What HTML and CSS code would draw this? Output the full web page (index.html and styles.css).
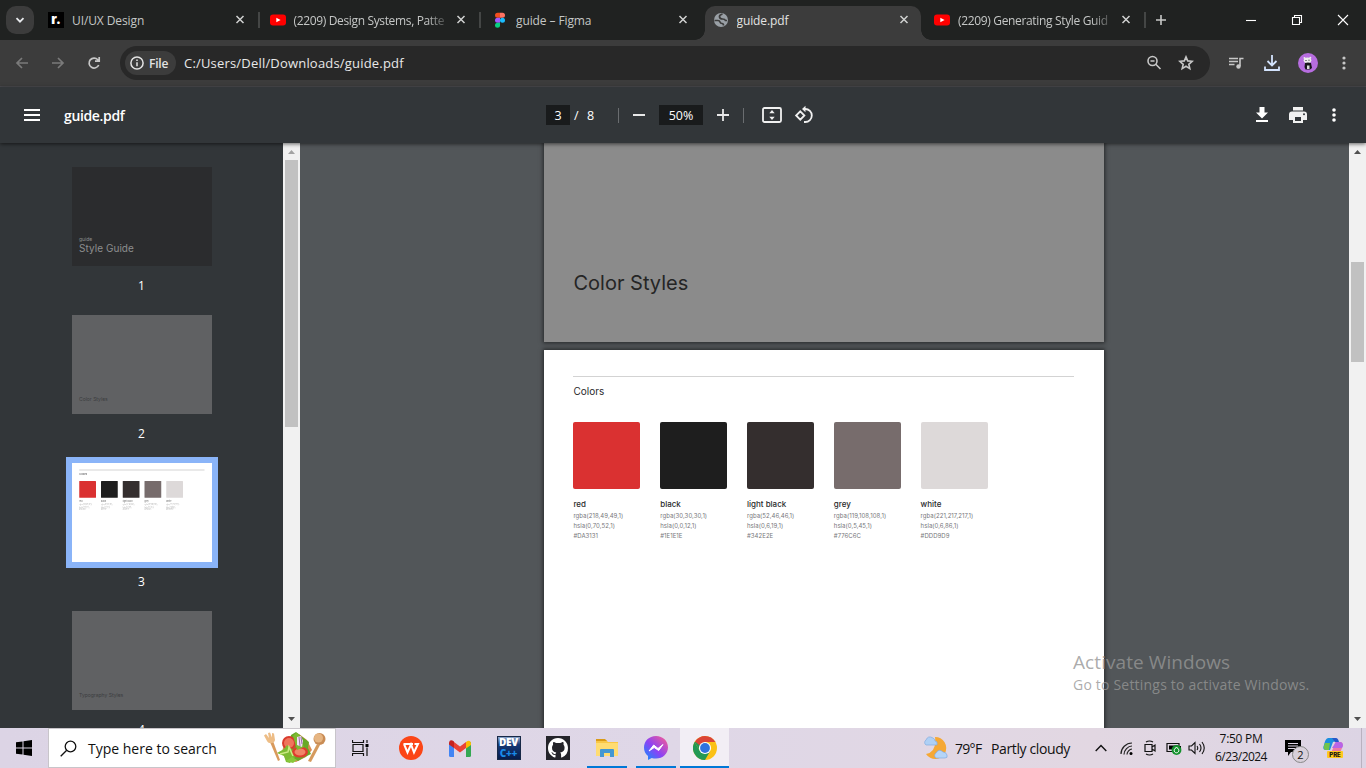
FILE: index.html
```html
<!DOCTYPE html>
<html lang="en">
<head>
<meta charset="utf-8">
<title>guide.pdf</title>
<link rel="stylesheet" href="styles.css">
</head>
<body>
<div class="screen">
  <header class="tabs">
    <button class="tab-search"><svg width="12" height="12" viewBox="0 0 12 12"><path d="M2.500 4.200 6 7.700l3.500-3.500" fill="none" stroke="#e8eaed" stroke-width="1.800"/></svg></button>
    <div class="tab"><span class="fav roadmap">r.</span><span class="tab-title t1">UI/UX Design</span><svg class="x" viewBox="0 0 16 16"><path d="m4.500 4 7 7m0-7-7 7"/></svg></div>
    <div class="tab"><svg class="fav" viewBox="0 0 16 16"><rect y="2.500" width="16" height="11" rx="3" fill="#f00"/><path d="m6.300 5.700 4.300 2.300-4.300 2.300z" fill="#fff"/></svg><span class="tab-title fade t2">(2209) Design Systems, Patte</span><svg class="x" viewBox="0 0 16 16"><path d="m4.500 4 7 7m0-7-7 7"/></svg></div>
    <div class="tab nosep"><svg class="fav" viewBox="0 0 16 16"><path d="M5.500.8H8v5H5.500a2.500 2.500 0 0 1 0-5" fill="#f24e1e"/><path d="M8 .8h2.500a2.500 2.500 0 0 1 0 5H8" fill="#ff7262"/><path d="M5.500 5.800H8v5H5.500a2.500 2.500 0 0 1 0-5" fill="#a259ff"/><circle cx="10.500" cy="8.300" r="2.500" fill="#1abcfe"/><path d="M5.500 10.800H8v2.500a2.500 2.500 0 1 1-2.500-2.500" fill="#0acf83"/></svg><span class="tab-title t3">guide – Figma</span><svg class="x" viewBox="0 0 16 16"><path d="m4.500 4 7 7m0-7-7 7"/></svg></div>
    <div class="tab active"><svg class="fav" viewBox="0 0 16 16"><circle cx="8" cy="8" r="7" fill="#9aa0a6"/><path d="M1.500 8.500H5q1.500 0 2 1.500t2 1.500q1.500 0 1.500 2M9.500 2Q6 3 6.500 5t3 2 3 1.500H14" fill="none" stroke="#3c3c3c" stroke-width="1.700"/></svg><span class="tab-title t4">guide.pdf</span><svg class="x" viewBox="0 0 16 16"><path d="m4.500 4 7 7m0-7-7 7"/></svg></div>
    <div class="tab"><svg class="fav" viewBox="0 0 16 16"><rect y="2.500" width="16" height="11" rx="3" fill="#f00"/><path d="m6.300 5.700 4.300 2.300-4.300 2.300z" fill="#fff"/></svg><span class="tab-title fade t5">(2209) Generating Style Guid</span><svg class="x" viewBox="0 0 16 16"><path d="m4.500 4 7 7m0-7-7 7"/></svg></div>
    <svg class="newtab" width="12" height="12" viewBox="0 0 12 12"><path d="M6 1v10M1 6h10" stroke="#c7c9c8" stroke-width="1.600"/></svg>
    <div class="wincontrols">
      <svg width="12" height="12" viewBox="0 0 12 12"><path d="M1 6.500h10"/></svg>
      <svg width="12" height="12" viewBox="0 0 12 12"><path d="M1.500 3.500h7v7h-7zM3.500 3.500v-2h7v7h-2"/></svg>
      <svg width="12" height="12" viewBox="0 0 12 12"><path d="m1 1 10 10M11 1 1 11"/></svg>
    </div>
  </header>

  <nav class="toolbar">
    <div class="navbtns">
      <svg class="dim" width="14" height="14" viewBox="0 0 14 14"><path d="M13 7H2M7 2 2 7l5 5"/></svg>
      <svg class="dim" width="14" height="14" viewBox="0 0 14 14"><path d="M1 7h11M7 2l5 5-5 5"/></svg>
      <svg width="14" height="14" viewBox="0 0 14 14"><path d="M11.700 9A5 5 0 1 1 10.800 3.700L12 5M12.200 1v4.200H8"/></svg>
    </div>
    <div class="omnibox">
      <span class="chip"><svg width="14" height="14" viewBox="0 0 14 14"><circle cx="7" cy="7" r="6.100" fill="none" stroke="#e3e3e3" stroke-width="1.500"/><path d="M7 6.200v4M7 3.600v1.500" stroke="#e3e3e3" stroke-width="1.500"/></svg><b>File</b></span>
      <span class="url">C:/Users/Dell/Downloads/guide.pdf</span>
      <svg class="mag" width="16" height="16" viewBox="0 0 16 16"><circle cx="6.500" cy="6" r="4.500"/><path d="m9.800 9.300 4.700 4.700M4.500 6h4"/></svg>
      <svg width="16" height="16" viewBox="0 0 16 16"><path d="m8 1.900 1.700 4 4.500.4-3.400 3 1 4.300L8 11.300l-3.800 2.300 1-4.300-3.400-3 4.500-.4z"/></svg>
    </div>
    <div class="extras">
      <svg width="16" height="16" viewBox="0 0 16 16"><path d="M1 3.500h9M1 6.500h9M1 9.500h5.500M12 11V3.500h3.500" fill="none" stroke="#c7c7c7" stroke-width="1.600"/><circle cx="10.500" cy="11.500" r="2.200" fill="#c7c7c7"/></svg>
      <svg width="18" height="18" viewBox="0 0 18 18"><path d="M9 1v10M4.500 7 9 11.500 13.500 7M2 12.500V16h14v-3.500" fill="none" stroke="#d3e3fd" stroke-width="1.800"/></svg>
      <svg width="20" height="20" viewBox="0 0 20 20"><circle cx="10" cy="10" r="10" fill="#b76de0"/><ellipse cx="9.500" cy="7.300" rx="3.800" ry="2.900" fill="#eee"/><circle cx="6.500" cy="5" r="1" fill="#eee"/><circle cx="12.300" cy="4.800" r="1" fill="#eee"/><path d="M7 10q3-1 6 0l1 5-2 1.500H7.500L6.500 14z" fill="#19161c"/><path d="M9 12.500h2.500V16H9z" fill="#ddd"/><path d="M7.500 7.500h1m2-.3h1" stroke="#222"/></svg>
      <svg width="4" height="16" viewBox="0 0 4 16"><g fill="#c7c7c7"><circle cx="2" cy="3" r="1.600"/><circle cx="2" cy="8" r="1.600"/><circle cx="2" cy="13" r="1.600"/></g></svg>
    </div>
  </nav>

  <section class="pdfbar">
    <div class="pdf-left"><svg width="16" height="12" viewBox="0 0 16 12"><path d="M0 1h16M0 6h16M0 11h16" stroke="#fff" stroke-width="2"/></svg><span class="pdf-title">guide.pdf</span></div>
    <div class="pdf-mid">
      <span class="field pagenum">3</span><span class="slash">/</span><span class="total">8</span><i class="sep s1"></i>
      <svg width="12" height="12" viewBox="0 0 12 12"><path d="M0 6h12" stroke="#e8e8e8" stroke-width="2"/></svg>
      <span class="field zoom">50%</span>
      <svg width="12" height="12" viewBox="0 0 12 12"><path d="M0 6h12M6 0v12" stroke="#e8e8e8" stroke-width="1.800"/></svg><i class="sep s2"></i>
      <svg class="fit" width="20" height="16" viewBox="0 0 20 16"><rect x="1" y="1" width="18" height="14" rx="1.500" fill="none" stroke="#f1f1f1" stroke-width="1.800"/><path d="m10 3 2.700 3.300H7.300zM10 13 7.300 9.700h5.400z" fill="#f1f1f1"/></svg>
      <svg class="rot" width="20" height="20" viewBox="0 0 20 20"><path d="m6.300 6.300 4.100 4.200-4.100 4.200-4.200-4.200zM10 4h1.300a6.500 6.500 0 0 1 0 13H10" fill="none" stroke="#f1f1f1" stroke-width="1.800"/><path d="M11.500.7v6.600L8 4z" fill="#f1f1f1"/></svg>
    </div>
    <div class="pdf-right">
      <svg width="12" height="16" viewBox="0 0 12 16"><path d="M3.500 0h5v5.500H12l-6 6-6-6h3.500zM0 13h12v2H0z" fill="#fff"/></svg>
      <svg width="18" height="16" viewBox="0 0 18 16"><path d="M4 0h10v3.500H4zM3 4.500h12a3 3 0 0 1 3 3V13h-4v3H4v-3H0V7.500a3 3 0 0 1 3-3" fill="#f1f1f1"/><path d="M6 10h6v4H6z" fill="#323639"/><circle cx="15" cy="7.300" r="1" fill="#323639"/></svg>
      <svg width="4" height="16" viewBox="0 0 4 16"><g fill="#fff"><circle cx="2" cy="3" r="1.800"/><circle cx="2" cy="8" r="1.800"/><circle cx="2" cy="13" r="1.800"/></g></svg>
    </div>
  </section>

  <main class="viewer">
    <aside class="sidebar">
      <div class="thumbs">
        <figure><div class="thumb dark"><small>guide</small><span>Style Guide</span></div><figcaption>1</figcaption></figure>
        <figure><div class="thumb cover"><em>Color Styles</em></div><figcaption>2</figcaption></figure>
        <figure><div class="thumb selected"><div class="mini">
          <div class="sheet">
            <h2>Colors</h2>
            <div class="palette">
              <div class="color"><div class="swatch red"></div><h3>red</h3><p>rgba(218,49,49,1)<br>hsla(0,70,52,1)<br>#DA3131</p></div>
              <div class="color"><div class="swatch black"></div><h3>black</h3><p>rgba(30,30,30,1)<br>hsla(0,0,12,1)<br>#1E1E1E</p></div>
              <div class="color"><div class="swatch light"></div><h3>light black</h3><p>rgba(52,46,46,1)<br>hsla(0,6,19,1)<br>#342E2E</p></div>
              <div class="color"><div class="swatch grey"></div><h3>grey</h3><p>rgba(119,108,108,1)<br>hsla(0,5,45,1)<br>#776C6C</p></div>
              <div class="color"><div class="swatch white"></div><h3>white</h3><p>rgba(221,217,217,1)<br>hsla(0,6,86,1)<br>#DDD9D9</p></div>
            </div>
          </div></div></div><figcaption>3</figcaption></figure>
        <figure><div class="thumb cover"><em>Typography Styles</em></div><figcaption>4</figcaption></figure>
      </div>
      <div class="scroll side"><svg class="up" width="7" height="4" viewBox="0 0 7 4"><path d="M0 4h7L3.500 0z" fill="#a3a3a3"/></svg><i></i><svg class="down" width="7" height="4" viewBox="0 0 7 4"><path d="M0 0h7L3.500 4z" fill="#505050"/></svg></div>
    </aside>
    <div class="doc">
      <div class="page cover-page"><h1>Color Styles</h1></div>
      <div class="page sheet">
        <h2>Colors</h2>
        <div class="palette">
          <div class="color"><div class="swatch red"></div><h3>red</h3><p>rgba(218,49,49,1)<br>hsla(0,70,52,1)<br>#DA3131</p></div>
          <div class="color"><div class="swatch black"></div><h3>black</h3><p>rgba(30,30,30,1)<br>hsla(0,0,12,1)<br>#1E1E1E</p></div>
          <div class="color"><div class="swatch light"></div><h3>light black</h3><p>rgba(52,46,46,1)<br>hsla(0,6,19,1)<br>#342E2E</p></div>
          <div class="color"><div class="swatch grey"></div><h3>grey</h3><p>rgba(119,108,108,1)<br>hsla(0,5,45,1)<br>#776C6C</p></div>
          <div class="color"><div class="swatch white"></div><h3>white</h3><p>rgba(221,217,217,1)<br>hsla(0,6,86,1)<br>#DDD9D9</p></div>
        </div>
      </div>
    </div>
    <div class="scroll main"><svg class="up" width="7" height="4" viewBox="0 0 7 4"><path d="M0 4h7L3.500 0z" fill="#505050"/></svg><i></i><svg class="down" width="7" height="4" viewBox="0 0 7 4"><path d="M0 0h7L3.500 4z" fill="#505050"/></svg></div>
  </main>

  <div class="watermark"><div class="wm1">Activate Windows</div><div class="wm2">Go to Settings to activate Windows.</div></div>

  <footer class="taskbar">
    <div class="start"><svg width="16" height="16" viewBox="0 0 16 16"><path d="M0 2.300 6.500 1.400v6.100H0zM7.500 1.200 16 0v7.500H7.500zM0 8.500h6.500v6.100L0 13.700zM7.500 8.500H16V16l-8.500-1.200z"/></svg></div>
    <div class="search">
      <svg width="17" height="17" viewBox="0 0 17 17"><circle cx="10.500" cy="6.500" r="5.300" fill="none" stroke="#111" stroke-width="1.300"/><path d="m6.700 10.300-6 6" stroke="#111" stroke-width="1.300"/></svg>
      <span class="type">Type here to search</span>
      <svg class="salad" width="62" height="32" viewBox="0 0 62 32">
        <path d="m6 10 8 19 2-1-7-19z" fill="#d99a5c"/><path d="M0 3.500 2 2l3 4-1-5 2-.5 2 5V1l2 .5L11 8c0 3-6 5-8 1z" fill="#edbd86"/>
        <path d="m53 12-9 17 3 1 9-17z" fill="#d59a5d"/><circle cx="55.500" cy="7" r="6" fill="#c98c55"/><circle cx="54.500" cy="6" r="4.500" fill="#e6b582"/>
        <path d="m18 20 2-8 8-9 7-1 8 6 5 10-6 7-10 5-10-2z" fill="#d88b52"/>
        <path d="m27 3 5-3 5 4 8 6-1 6 3 6-8 4-5 3-5-3-7-3 3-8z" fill="#67a927"/>
        <circle cx="25" cy="11" r="7" fill="#d93b2e"/><circle cx="25" cy="11" r="5" fill="#ef755c"/>
        <path d="m13 21 7-4 3-4 6 5 2 7-5 6-4-1-2-6z" fill="#7dbb32"/><path d="m22 29 6-4 5 3-4 3z" fill="#89c83b"/>
        <ellipse cx="36" cy="20" rx="8" ry="5.500" fill="#df3d2e"/><ellipse cx="36" cy="20" rx="5.500" ry="3.500" fill="#f18567"/>
        <path d="M29 4q5-7 7 2l4 9-7 3z" fill="#7eb931"/><path d="m33 5 4-1 2 5-1 6-5-2z" fill="#efdff3"/><path d="m35 5 1 9m1-9 1 7" stroke="#9f6bab" fill="none"/><path d="m16 22 8-2 1-5 4 9" fill="none" stroke="#ccea83" stroke-width="1.500"/>
      </svg>
    </div>
    <div class="task view"><svg width="17" height="16" viewBox="0 0 17 16"><path d="M1 4.500h10v7H1zM.5 0v2.500h11V0M.5 16v-2.500h11V16M15 0v3M15 7.500V16" fill="none" stroke="#111" stroke-width="1.200"/><path d="M13.500 4h3v3h-3z"/></svg></div>
    <div class="task"><svg width="24" height="24" viewBox="0 0 24 24"><circle cx="12" cy="12" r="12" fill="#fb4617"/><path d="M4.500 8h9.500M5 8l3.500 8.500 3.500-8 3 8L19 8h-3.500" fill="none" stroke="#fff" stroke-width="2"/></svg></div>
    <div class="task"><svg width="22" height="17" viewBox="0 0 22 17"><path d="M0 2.500 5 5v12H1.500Q0 17 0 15.500z" fill="#4285f4"/><path d="M17 5l5-3v13.500q0 1.500-1.500 1.500H17z" fill="#34a853"/><path d="m5 2 6 4.500L17 2v6l-6 4.500L5 8z" fill="#ea4335"/><path d="M0 2.500Q1-1.500 5 1.500V8L0 4.500" fill="#c5221f"/><path d="M17 2q4-3 5 1v2l-5 3.500z" fill="#fbbc04"/></svg></div>
    <div class="task"><div class="dev"><b>DEV</b><b class="cpp">C++</b></div></div>
    <div class="task"><svg width="24" height="24" viewBox="0 0 24 24"><path d="M0 0h24v24H0z" fill="#24242a"/><path d="M12 2C6.300 2 2 6.500 2 12c0 4.500 2.800 8.200 6.800 9.500.6.100.7-.2.700-.5v-2.200c-2.400.5-3-.6-3.300-1.300-.3-.6-.7-1-1.100-1.300.9-.2 1.600.1 2.200 1 .6.900 1.300 1 2.300.7.100-.7.400-1.100.7-1.400-2.800-.4-4.300-1.800-4.300-4.800 0-1.200.4-2.200 1.100-2.900-.2-.8-.2-1.800.2-2.900 1.200 0 2.200.6 3 1.200a10 10 0 0 1 4 0c.8-.6 1.800-1.200 3-1.200.4 1.100.4 2.100.2 2.900.7.700 1.100 1.700 1.100 2.900 0 3-1.600 4.400-4.400 4.800.6.500.9 1.300.9 2.200V21c0 .4.200.6.700.5A10 10 0 0 0 22 12c0-5.500-4.400-10-10-10" fill="#fff"/></svg></div>
    <div class="task open"><svg width="22" height="20" viewBox="0 0 22 20"><path d="M0 2h10l2 2h10v14H0z" fill="#f9c746"/><path d="M0 1h9l2 2H0z" fill="#da9b17"/><path d="M0 5h22v13H0z" fill="#ffdc72"/><path d="M4 12q0-1 1-1h12q1 0 1 1v7h-4v-4H8v4H4z" fill="#4497d2"/></svg></div>
    <div class="task open"><svg width="24" height="24" viewBox="0 0 24 24"><defs><linearGradient id="ms" x1="0" y1="1" x2="1" y2="0"><stop stop-color="#0695ff"/><stop offset=".45" stop-color="#8b42f5"/><stop offset="1" stop-color="#ff5f8c"/></linearGradient></defs><path d="M12 0C5 0 0 5 0 11.600c0 3.400 1.300 6.400 4 8.500V24l3.700-2c1.400.4 2.800.6 4.300.6 7 0 12-5 12-11.300S19 0 12 0" fill="url(#ms)"/><path d="m5 15 4.700-6 4.300 3.500 5-4-4.300 6-4.500-3z" fill="#fff" stroke="#fff"/></svg></div>
    <div class="task open current"><svg width="24" height="24" viewBox="0 0 24 24"><circle cx="12" cy="12" r="12" fill="#fbc116"/><path d="M1.600 6A12 12 0 0 0 12 24l5.200-9L12 12l-5.200 3z" fill="#229954"/><path d="M1.600 6 6.800 15 12 12V6z" fill="#229954"/><path d="M2 5.500Q6 0 12 0q7 0 10.400 6H12L6.300 9z" fill="#db4437"/><circle cx="12" cy="12" r="6.100" fill="#fff"/><circle cx="12" cy="12" r="4.900" fill="#2f73df"/></svg></div>
    <div class="tray">
      <svg class="weather" width="26" height="24" viewBox="0 0 26 24"><path d="M12 1a11 11 0 1 1-9 17q11-2 9-17" fill="#f5a834"/><path d="M3 9a3 3 0 0 1 0-5Q5-1 10 2q2 1 2 3 3 0 2 4z" fill="#aed0f5" stroke="#82acdf" stroke-width=".7"/><path d="M13 22a3 3 0 0 1 0-5q3-5 7-1 3 0 4 3t-2 3z" fill="#b5d5f8" stroke="#82acdf" stroke-width=".7"/></svg>
      <span class="temp">79°F</span><span class="cloudy">Partly cloudy</span>
      <svg class="chev" width="12" height="8" viewBox="0 0 12 8"><path d="m.7 7 5.300-5.500L11.300 7" fill="none" stroke="#111" stroke-width="1.400"/></svg>
      <svg class="wifi" width="13" height="13" viewBox="0 0 13 13"><path d="M1 12C1 6 6 1 12 1M4 12.500C4 8 8 4 12 4M7 12.500C7 10 9.500 7 12 7" fill="none" stroke="#222" stroke-width="1.200"/><circle cx="11" cy="11.500" r="1.500"/></svg>
      <svg class="meet" width="12" height="16" viewBox="0 0 12 16"><path d="M1 4.500h7v7H1zM8 7l3-2v6L8 9M2 2q3.500-2 7 0M2 14q3.500 2 7 0" fill="none" stroke="#111" stroke-width="1.200"/></svg>
      <svg class="bat" width="16" height="13" viewBox="0 0 16 13"><path d="M1 1.500h12v8H1z" fill="none" stroke="#111" stroke-width="1.200"/><path d="M3 3.500h9v4H3zM13 4h2v3h-2z"/><circle cx="10.500" cy="8" r="4.900" fill="#14912d"/><path d="m10.500 5 2 2.300c1 2-.5 3.500-2 3.500s-3-1.500-2-3.500z" fill="none" stroke="#fff"/></svg>
      <svg class="vol" width="17" height="14" viewBox="0 0 17 14"><path d="M1 5h2.500L7 1.500v11L3.500 9H1zM9 5q1.500 2 0 4M11.500 3q3 4 0 8M14 1q4.500 6 0 12" fill="none" stroke="#111" stroke-width="1.100"/></svg>
      <div class="clock"><span class="time">7:50 PM</span><span class="date">6/23/2024</span></div>
      <div class="notif"><svg width="17" height="17" viewBox="0 0 17 17"><path d="M0 0h16v12H6l-3 4v-4H0z"/><path d="M3 3.500h10M3 6h10M3 8.500h7" stroke="#ddd4e4"/></svg><span>2</span></div>
      <div class="copilot"><svg width="20" height="17" viewBox="0 0 20 17"><path d="M5 1h6q2 0 2.500 3L10 5 7 13H3Q-1 13 1 8 2 2 5 1" fill="#1c8fdf"/><path d="M2 6h5l-1 7H3q-4 0-1-7" fill="#70c44c"/><path d="M9 1h4q2 0 3 4h-4z" fill="#2658c9"/><path d="M13 5h4q4 0 2 6l-2 5H8l3-7q1-4 2-4" fill="#ee79a5"/><path d="m11 8 2-3h4q3 0 3 4l-1 2H9z" fill="#b865e6"/></svg><b>PRE</b></div>
      <i class="desktop"></i>
    </div>
  </footer>
</div>
</body>
</html>
```
FILE: styles.css
```css
* { box-sizing: border-box; }
body { margin: 0; font-family: "Open Sans", "Noto Sans", sans-serif; overflow: hidden; }
svg { flex: none; display: block; }
h1, h2, h3, p, figure { margin: 0; font-weight: 400; }
.screen { width: 1366px; height: 768px; display: flex; flex-direction: column; background: #3c3c3c; position: relative; overflow: hidden; }
.tabs { height: 40px; background: #202221; display: flex; align-items: center; flex: none; }
.tab-search { width: 28px; height: 28px; margin: 0 2px 0 6px; padding: 0; border: 0; border-radius: 10px; background: #3c3c3c; display: flex; align-items: center; justify-content: center; flex: none; }
.tab { width: 221.500px; height: 40px; padding: 0 10px 0 12px; display: flex; align-items: center; gap: 8px; flex: none; position: relative; color: #c5c7c6; }
.tab:not(.nosep):not(.active)::after { content: ""; position: absolute; right: -2px; top: 12px; width: 2px; height: 16px; background: #444645; }
.fav { width: 16px; height: 16px; flex: none; }
.roadmap { background: #000; color: #fff; font: 900 13px/14px Inter, sans-serif; text-align: center; }
.tab-title { flex: 1; width: 0; overflow: hidden; white-space: nowrap; font-size: 12px; line-height: 18px; padding-top: 1px; letter-spacing: -.1px; }
.nosep .fav, .nosep .tab-title { position: relative; left: 1px; }
.fade { -webkit-mask-image: linear-gradient(90deg, #000 88%, rgba(0,0,0,.25)); mask-image: linear-gradient(90deg, #000 88%, rgba(0,0,0,.25)); }
.t2 { letter-spacing: -.35px; }
.t5 { letter-spacing: -.34px; }
.x { width: 16px; height: 16px; fill: none; stroke: #d0d2d1; stroke-width: 1.5; }
.tab.active { color: #e3e3e3; }
.tab.active::before { content: ""; position: absolute; left: 4px; right: 1px; top: 6px; bottom: 0; background: #3c3c3c; border-radius: 10px 10px 0 0; }
.tab.active > * { position: relative; }
.tab.active::after { content: ""; position: absolute; left: -6px; right: -9px; bottom: 0; height: 10px; background: radial-gradient(circle at 0 0, transparent 9.500px, #3c3c3c 10px) left / 10px 10px no-repeat, radial-gradient(circle at 100% 0, transparent 9.500px, #3c3c3c 10px) right / 10px 10px no-repeat; }
.newtab { margin-left: 11px; }
.wincontrols { display: flex; gap: 34px; margin-left: auto; margin-right: 17px; }
.wincontrols svg { fill: none; stroke: #fff; stroke-width: 1.1; }
.toolbar { height: 47px; flex: none; background: #3c3c3c; border-bottom: 1px solid #4b4b4f; display: flex; align-items: center; }
.navbtns { width: 120px; padding-left: 15px; display: flex; gap: 22px; }
.navbtns svg { fill: none; stroke: #c7c7c7; stroke-width: 1.7; }
.navbtns .dim { stroke: #7a7a7a; }
.omnibox { width: 1090px; height: 34px; border-radius: 17px; background: #282828; display: flex; align-items: center; padding: 0 16px 0 5px; }
.omnibox > svg { fill: none; stroke: #c7c7c7; stroke-width: 1.6; }
.omnibox .mag { margin-left: auto; margin-right: 16px; }
.chip { width: 51px; height: 24px; border-radius: 12px; background: #3c3c3c; display: flex; align-items: center; gap: 5px; padding-left: 5px; color: #e3e3e3; font-size: 12px; }
.chip b { font-weight: 600; letter-spacing: -.2px; }
.url { margin-left: 8px; color: #e8e8e8; font-size: 13px; letter-spacing: .19px; }
.extras { display: flex; align-items: center; margin-left: 18px; }
.extras svg:nth-child(2) { margin-left: 19px; }
.extras svg:nth-child(3) { margin-left: 17px; }
.extras svg:nth-child(4) { margin-left: 24px; }
.pdfbar { height: 56px; background: #323639; flex: none; display: grid; grid-template-columns: 546px 1fr auto; align-items: center; color: #fff; position: relative; z-index: 2; box-shadow: 0 1px 4px rgba(0,0,0,.6); }
.pdf-left { display: flex; align-items: center; padding-left: 24px; gap: 24px; }
.pdf-title { font-size: 14px; line-height: 20px; font-weight: 600; padding-top: 2px; letter-spacing: -.35px; }
.pdf-mid { display: flex; align-items: center; font-size: 12.500px; }
.field { background: #191b1c; height: 20px; line-height: 21px; text-align: center; }
.pagenum { width: 24px; }
.slash { margin-left: 4px; width: 13px; }
.total { width: 8px; }
.sep { width: 1px; height: 15px; background: #6a6d70; }
.s1 { margin: 0 14px 0 23px; }
.zoom { width: 44px; margin: 0 14px; }
.s2 { margin: 0 18px 0 14px; }
.rot { margin-left: 12px; }
.pdf-right { display: flex; align-items: center; padding-right: 30px; }
.pdf-right svg:nth-child(2) { margin: 0 25px 0 21px; }
.viewer { height: 585px; flex: none; display: flex; background: #525659; }
.sidebar { width: 300px; background: #323639; display: flex; overflow: hidden; }
.thumbs { width: 283px; padding-top: 24px; display: flex; flex-direction: column; align-items: center; }
figure { width: 140px; height: 148px; flex: none; }
.thumb { width: 140px; height: 99px; padding-left: 7.500px; font-family: Inter, sans-serif; }
.thumb.dark { background: #2b2c2e; display: flex; flex-direction: column; padding-top: 69px; color: #8d8e8f; }
.dark small { font-size: 5px; line-height: 6px; }
.dark span { font-size: 10px; line-height: 13px; letter-spacing: .05px; }
.cover { background: #606163; display: flex; padding-top: 79px; color: #3c3d40; }
.cover em { font-style: normal; font-size: 5px; line-height: 10px; }
.selected { padding: 0; background: #fff; outline: 6px solid #8ab4f8; overflow: hidden; }
.mini { width: 560px; height: 396px; transform: scale(.25); transform-origin: 0 0; }
figcaption { color: #fff; font-size: 12px; line-height: 18px; text-align: center; margin-top: 11px; }
.scroll { width: 17px; height: 585px; background: #f1f1f1; display: flex; flex-direction: column; align-items: center; padding: 7px 0 7px; flex: none; }
.scroll i { width: 13px; background: #c1c1c1; }
.scroll .down { margin-top: auto; }
.side i { height: 267px; margin-top: 6px; }
.main i { height: 100px; margin-top: 108px; }
.doc { width: 1049px; padding-right: 1px; display: flex; flex-direction: column; align-items: center; gap: 8px; overflow: hidden; }
.page { width: 560px; flex: none; box-shadow: 0 0 4px 1px rgba(0,0,0,.55); }
.cover-page { height: 199px; background: #8b8b8b; padding: 128px 0 0 29.500px; }
.cover-page h1 { font: 400 20px/25px Inter, sans-serif; color: #252525; }
.sheet { height: 396px; background: #fff; padding: 26px 30px 0 29.400px; font-family: Inter, sans-serif; color: #29292b; }
.sheet h2 { border-top: 1px solid #d3d3d3; font-size: 10px; line-height: 12px; padding-top: 8px; height: 46.400px; letter-spacing: .05px; }
.mini .sheet h2 { border-top-width: 4px; padding-top: 7px; }
.mini .sheet p { color: #aaa; }
.mini .sheet h3 { color: #777; }
.palette { display: flex; gap: 19.800px; }
.color { width: 67px; white-space: nowrap; }
.swatch { height: 67px; border-radius: 2px; }
.red { background: #da3131; }
.black { background: #1e1e1e; }
.light { background: #342e2e; }
.grey { background: #776c6c; }
.white { background: #ddd9d9; }
.color h3 { font-size: 8px; line-height: 10px; margin-top: 10px; font-weight: 500; }
.color p { font-size: 6px; line-height: 10px; color: #77777b; margin-top: 1.600px; letter-spacing: .05px; }
.watermark { position: absolute; left: 1073px; top: 650px; z-index: 4; color: rgba(150,150,150,.8); white-space: nowrap; }
.wm1 { font-size: 19px; line-height: 24px; letter-spacing: .08px; }
.wm2 { font-size: 14px; line-height: 22px; letter-spacing: .2px; }
.taskbar { height: 40px; flex: none; display: flex; background: linear-gradient(90deg, #dcd4e5, #dfd7e7 50%, #e2d7e2 80%, #dcd4e4); color: #111; position: relative; }
.start { width: 48px; display: flex; align-items: center; justify-content: center; flex: none; }
.search { width: 288px; border: 1px solid #c8c5ca; background: #fff; display: flex; align-items: center; padding-left: 11px; flex: none; }
.type { width: 177px; flex: none; margin-left: 11px; font-size: 14px; white-space: nowrap; }
.salad { margin-left: -1px; }
.task { width: 49px; display: flex; align-items: center; justify-content: center; flex: none; }
.task.view { width: 50px; justify-content: flex-start; padding-left: 16px; }
.open { position: relative; }
.open::after { content: ""; position: absolute; height: 2px; bottom: 0; left: 5px; right: 4px; background: #0078d7; }
.current { background: #f2eef5; }
.current::after { left: 0; right: 0; }
.dev { width: 24px; height: 24px; background: linear-gradient(#8da5ca, #153975 35%, #071d4c); border: 1px solid #182947; overflow: hidden; font: 800 10px/11px "Open Sans", sans-serif; letter-spacing: -.3px; color: #fff; display: grid; grid-template-rows: 11px 11px; justify-items: center; }
.cpp { color: #198be8; }
.tray { margin-left: auto; display: flex; align-items: center; height: 40px; width: 444px; flex: none; white-space: nowrap; }
.weather { margin-left: 1px; }
.temp { width: 36px; flex: none; margin-left: 6px; font-size: 14px; letter-spacing: -.7px; }
.cloudy { width: 103px; flex: none; font-size: 14px; letter-spacing: -.38px; }
.chev { margin-left: 1px; }
.wifi { margin-left: 13px; }
.meet { margin-left: 11px; }
.bat { margin-left: 10px; }
.vol { margin-left: 6px; }
.clock { width: 60px; flex: none; margin-left: 6px; font-size: 12px; line-height: 18px; display: flex; flex-direction: column; align-items: center; }
.time { letter-spacing: -.3px; }
.date { letter-spacing: -.55px; }
.notif { width: 24px; height: 24px; flex: none; margin-left: 14px; position: relative; padding-top: 4px; }
.notif span { position: absolute; right: 0; top: 10px; width: 17px; height: 17px; border: 1px solid #888; border-radius: 50%; background: #d8d0da; font-size: 11px; line-height: 15px; text-align: center; }
.copilot { width: 20px; height: 22px; flex: none; margin-left: 14px; position: relative; }
.copilot b { position: absolute; left: 4px; bottom: 1px; width: 16px; height: 7px; border-radius: 1px; background: #ffc91f; font: 800 6px/7px Inter, sans-serif; text-align: center; }
.desktop { width: 1px; height: 40px; margin-left: 18px; background: #b9b2c0; }
```
